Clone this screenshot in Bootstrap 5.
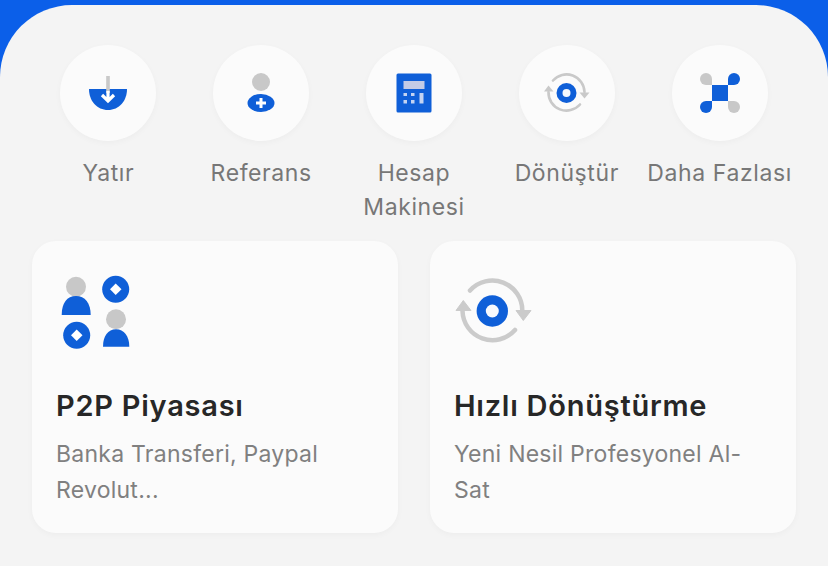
<!DOCTYPE html>
<html lang="tr">
<head>
  <meta charset="UTF-8" />
  <meta name="viewport" content="width=device-width, initial-scale=1.0"/>
  <title>Menu</title>
  <link href="https://cdn.jsdelivr.net/npm/bootstrap@5.3.3/dist/css/bootstrap.min.css" rel="stylesheet"/>
  <style>
    html, body { height: 100%; }
    body {
      margin: 0;
      overflow: hidden;
      background: #0b5fe9;
      font-family: "Inter", "Liberation Sans", sans-serif;
    }
    .sheet {
      margin-top: 5px;
      height: 561px;
      padding: 40px 32px 0;
      background: #f4f4f4;
      border-radius: 72px 72px 0 0;
    }
    .quick-item { width: 20%; }
    .quick-circle {
      width: 96px;
      height: 96px;
      margin-bottom: 15px;
      background: #fbfbfb;
      box-shadow: 0 2px 6px rgba(0,0,0,.03);
    }
    .quick-label {
      color: #777;
      font-size: 23px;
      letter-spacing: .6px;
      line-height: 34px;
      white-space: nowrap;
    }
    .quick-row { height: 196px; }
    .cards { gap: 32px; }
    .promo {
      width: 366px;
      height: 292px;
      padding: 34px 24px 0;
      background: #fbfbfb;
      border: 0;
      border-radius: 24px;
      box-shadow: 0 2px 6px rgba(0,0,0,.03);
    }
    .promo-icon { height: 76px; margin-bottom: 34px; }
    .promo-title {
      color: #272727;
      font-size: 29px;
      font-weight: 600;
      letter-spacing: .75px;
      line-height: 42px;
      margin-bottom: 9px;
    }
    .promo-text {
      color: #808080;
      font-size: 23px;
      letter-spacing: .25px;
      line-height: 36px;
      margin: 0;
    }
  </style>
</head>
<body>
  <div class="sheet">
    <div class="d-flex quick-row">
      <div class="quick-item d-flex flex-column align-items-center text-center">
        <div class="quick-circle rounded-circle d-flex align-items-center justify-content-center">
          <svg width="40" height="40" viewBox="0 0 40 40">
            <path d="M1 16H39C39 28 31 37 20 37S1 28 1 16Z" fill="#0f5fd8"/>
            <path d="M20 3V20" stroke="#c9c9c9" stroke-width="3.6" fill="none"/>
            <path d="M20 18V28M14 22L20 28L26 22" stroke="#fff" stroke-width="3.2" fill="none"/>
          </svg>
        </div>
        <div class="quick-label">Yatır</div>
      </div>
      <div class="quick-item d-flex flex-column align-items-center text-center">
        <div class="quick-circle rounded-circle d-flex align-items-center justify-content-center">
          <svg width="40" height="44" viewBox="0 0 40 44">
            <circle cx="20" cy="11" r="9" fill="#c8c8c8"/>
            <ellipse cx="20" cy="32" rx="13.5" ry="9" fill="#0f5fd8"/>
            <path d="M20 27V37M15 32H25" stroke="#fff" stroke-width="3"/>
          </svg>
        </div>
        <div class="quick-label">Referans</div>
      </div>
      <div class="quick-item d-flex flex-column align-items-center text-center">
        <div class="quick-circle rounded-circle d-flex align-items-center justify-content-center">
          <svg width="36" height="40" viewBox="0 0 36 40">
            <rect x="0.5" y="0.5" width="35" height="39" rx="1.5" fill="#0f5fd8"/>
            <rect x="7.5" y="8" width="21" height="8" fill="#c3cbe6"/>
            <g fill="#c3d3f2">
              <rect x="7.5" y="20" width="3.5" height="3"/>
              <rect x="15" y="20" width="3.5" height="3"/>
              <rect x="7.5" y="27" width="3.5" height="3.5"/>
              <rect x="15" y="27" width="3.5" height="3.5"/>
              <rect x="23.5" y="20" width="4" height="10.5"/>
            </g>
          </svg>
        </div>
        <div class="quick-label">Hesap<br>Makinesi</div>
      </div>
      <div class="quick-item d-flex flex-column align-items-center text-center">
        <div class="quick-circle rounded-circle d-flex align-items-center justify-content-center">
          <svg width="46" height="40" viewBox="0 0 46 40">
            <g stroke="#c9c9c9" stroke-width="2.6" fill="none" stroke-linecap="round">
              <path d="M9 7.5A18 18 0 0 1 40.5 19"/>
              <path d="M4.5 19A18 18 0 0 0 36 31.5"/>
            </g>
            <path d="M35.5 19.5H45.5L40.5 25.5Z" fill="#c9c9c9"/>
            <path d="M0 18.5H9.5L4.5 12.5Z" fill="#c9c9c9"/>
            <circle cx="22.5" cy="20" r="10" fill="#0f5fd8"/>
            <circle cx="22.5" cy="20" r="4" fill="#f4f8fd"/>
          </svg>
        </div>
        <div class="quick-label">Dönüştür</div>
      </div>
      <div class="quick-item d-flex flex-column align-items-center text-center">
        <div class="quick-circle rounded-circle d-flex align-items-center justify-content-center">
          <svg width="40" height="40" viewBox="0 0 40 40">
            <path d="M12 12H6A6 6 0 1 1 12 6Z" fill="#c8c8c8"/>
            <path d="M28 12V6A6 6 0 1 1 34 12Z" fill="#0f5fd8"/>
            <path d="M12 28V34A6 6 0 1 1 6 28Z" fill="#0f5fd8"/>
            <path d="M28 28H34A6 6 0 1 1 28 34Z" fill="#c8c8c8"/>
            <rect x="12" y="12" width="16" height="16" fill="#0f5fd8"/>
          </svg>
        </div>
        <div class="quick-label">Daha Fazlası</div>
      </div>
    </div>

    <div class="d-flex cards">
      <div class="card promo">
        <div class="promo-icon">
          <svg width="76" height="76" viewBox="0 0 76 76">
            <circle cx="20" cy="11.7" r="10" fill="#c8c8c8"/>
            <path d="M5.7 40C5.7 28 11 21 20 21S34.7 28 34.7 40Z" fill="#0f5fd8"/>
            <circle cx="59.7" cy="14.3" r="13.5" fill="#0f5fd8"/>
            <path d="M59.7 8.5L65.5 14.3L59.7 20L54 14.3Z" fill="#fff"/>
            <circle cx="20.7" cy="60.3" r="13.5" fill="#0f5fd8"/>
            <path d="M20.7 54.5L26.5 60.3L20.7 66L15 60.3Z" fill="#fff"/>
            <circle cx="60" cy="44.3" r="10" fill="#c8c8c8"/>
            <path d="M47 71.7C47 61 52 54.3 60 54.3S73.3 61 73.3 71.7Z" fill="#0f5fd8"/>
          </svg>
        </div>
        <div class="promo-title">P2P Piyasası</div>
        <p class="promo-text">Banka Transferi, Paypal Revolut...</p>
      </div>
      <div class="card promo">
        <div class="promo-icon">
          <svg width="80" height="70" viewBox="-2 -4 80 70">
            <g stroke="#cbcbcb" stroke-width="4.5" fill="none" stroke-linecap="round">
              <path d="M14 11.5A30 30 0 0 1 66.3 32"/>
              <path d="M6.5 32A30 30 0 0 0 59 51"/>
            </g>
            <path d="M60 31.5H75L67.3 41.5Z" fill="#cbcbcb" stroke="#cbcbcb" stroke-width="1" stroke-linejoin="round"/>
            <path d="M0 31.5H15L7.3 21.5Z" fill="#cbcbcb" stroke="#cbcbcb" stroke-width="1" stroke-linejoin="round"/>
            <circle cx="36.3" cy="32" r="15.7" fill="#0f5fd8"/>
            <circle cx="36.3" cy="32" r="6.5" fill="#f7f9fd"/>
          </svg>
        </div>
        <div class="promo-title">Hızlı Dönüştürme</div>
        <p class="promo-text">Yeni Nesil Profesyonel Al-Sat</p>
      </div>
    </div>
  </div>
  <script src="https://cdn.jsdelivr.net/npm/bootstrap@5.3.3/dist/js/bootstrap.bundle.min.js"></script>
</body>
</html>
